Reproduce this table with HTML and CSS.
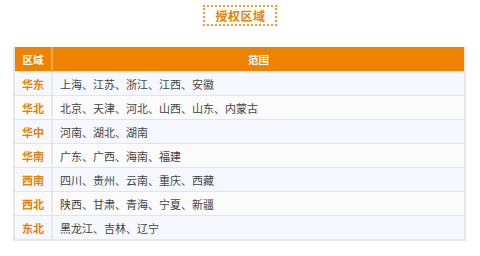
FILE: index.html
```html
<!DOCTYPE html>
<html lang="zh">
<head>
<meta charset="utf-8">
<link rel="stylesheet" href="styles.css">
</head>
<body>
<div class="page">
  <div class="title-wrap"><div class="title">授权区域</div></div>
  <table class="regions">
    <thead>
      <tr><th class="c1">区域</th><th class="c2">范围</th></tr>
    </thead>
    <tbody>
      <tr><td class="name">华东</td><td class="list">上海、江苏、浙江、江西、安徽</td></tr>
      <tr><td class="name">华北</td><td class="list">北京、天津、河北、山西、山东、内蒙古</td></tr>
      <tr><td class="name">华中</td><td class="list">河南、湖北、湖南</td></tr>
      <tr><td class="name">华南</td><td class="list">广东、广西、海南、福建</td></tr>
      <tr><td class="name">西南</td><td class="list">四川、贵州、云南、重庆、西藏</td></tr>
      <tr><td class="name">西北</td><td class="list">陕西、甘肃、青海、宁夏、新疆</td></tr>
      <tr><td class="name">东北</td><td class="list">黑龙江、吉林、辽宁</td></tr>
    </tbody>
  </table>
</div>
</body>
</html>
```
FILE: styles.css
```css
html, body {
  margin: 0;
  padding: 0;
  background: #ffffff;
}
body {
  font-family: "Noto Sans CJK SC", "Noto Sans", sans-serif;
  width: 480px;
  height: 256px;
  overflow: hidden;
}
.page {
  padding-top: 5px;
}
.title-wrap {
  display: flex;
  justify-content: center;
}
.title {
  border: 2px dotted #f39a2a;
  color: #ee7d00;
  font-size: 12px;
  font-weight: bold;
  line-height: 17px;
  padding: 0 9px 0 10px;
  letter-spacing: 0.5px;
}
.regions {
  margin: 21px 0 0 13px;
  width: 453px;
  border-collapse: collapse;
  border: 2px solid #e6e6e6;
  border-top: none;
  font-size: 11px;
}
.regions th {
  background: #ef8200;
  color: #ffffff;
  font-weight: bold;
  font-size: 10.5px;
  height: 24px;
  padding: 0;
  text-align: center;
}
.regions th.c1 {
  width: 36px;
  border-right: 2px solid #f5a54a;
}
.regions td {
  height: 23px;
  padding: 0;
  border-top: 1px solid #e4e4e4;
  border-bottom: 1px solid #e4e4e4;
}
.regions td.name {
  color: #ee7d00;
  font-weight: bold;
  text-align: center;
  border-right: 2px solid #e8e8e8;
}
.regions td.list {
  color: #444444;
  padding-left: 7px;
}
.regions tbody tr:nth-child(odd) td {
  background: #f5f9ff;
}
.regions tbody tr:nth-child(even) td {
  background: #fbfbfb;
}
```
